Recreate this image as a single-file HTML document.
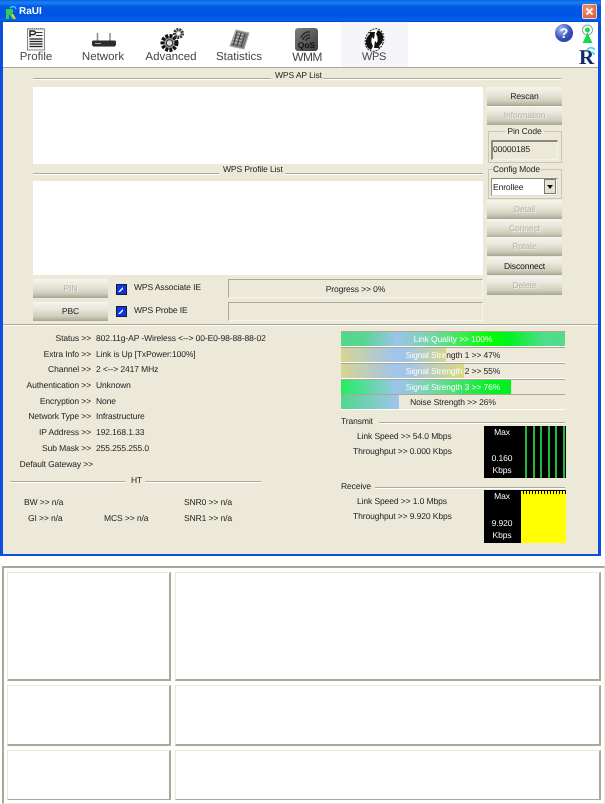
<!DOCTYPE html>
<html><head><meta charset="utf-8">
<style>
html,body{margin:0;padding:0;background:#fff;}
body{width:605px;height:804px;position:relative;overflow:hidden;font-family:"Liberation Sans",sans-serif;font-size:8.5px;color:#222;text-rendering:geometricPrecision;}
div,span,svg{position:absolute;}
.t{white-space:nowrap;line-height:12px;height:12px;letter-spacing:-.1px;}
.r{text-align:right;}
.c{text-align:center;}
.btn{left:487px;width:75px;height:19px;background:linear-gradient(#f5f4ee 0%,#e9e8dc 35%,#cfcebd 75%,#a8a693 100%);text-align:center;line-height:19px;letter-spacing:-.1px;color:#222;}
.dis{color:#b5b4a6;text-shadow:1px 1px 0 #f2f1e8;}
.ln{height:1px;background:#aca899;box-shadow:0 1px 0 #fff;}
.tab{font-size:11.5px;letter-spacing:0;color:#444;text-align:center;width:70px;top:50px;line-height:14px;white-space:nowrap;}
.bar{left:341px;width:224px;height:14px;background:#ece9d8;box-shadow:0 -1px 0 #aca899,0 1px 0 #fff;}
.bar .f{left:0;top:0;height:14px;overflow:hidden;}
.bar .l{left:0;width:224px;top:1px;text-align:center;line-height:12px;letter-spacing:-.1px;white-space:nowrap;}
.cell{box-sizing:border-box;background:#fff;border-top:1px solid #ece9d8;border-left:1px solid #ece9d8;border-right:2px solid #aca899;border-bottom:2px solid #aca899;}
.sunk{box-sizing:border-box;border-top:1px solid #aca899;border-left:1px solid #aca899;border-right:1px solid #f6f5ee;border-bottom:1px solid #f6f5ee;}
.wt{color:#fff;}
.cb{left:116px;width:11px;height:11px;background:#0c34e8;border:1px solid #1a1a2a;box-sizing:border-box;}
</style></head>
<body>
<!-- window -->
<div style="left:0;top:0;width:601px;height:556px;background:#0a50dc;"></div>
<div style="left:0;top:0;width:601px;height:22px;background:linear-gradient(#0a60e8 0%,#1a82f4 12%,#0458e4 30%,#0054e3 70%,#0460ee 90%,#0048c8 100%);"></div>
<svg style="left:4px;top:5px" width="14" height="15" viewBox="0 0 14 15"><path d="M2 4h5c3 0 3 4 0 5l3 5H8L5 9v5H2z" fill="#2fd14a"/><path d="M6 3c2-2 5-2 6 1" stroke="#3ac8ff" stroke-width="1.500" fill="none"/><path d="M8 9l3 5" stroke="#f0d020" stroke-width="2"/></svg>
<div class="t" style="left:19px;top:6px;font-size:10px;font-weight:bold;color:#fff;letter-spacing:0;">RaUI</div>
<div style="left:582px;top:4px;width:15px;height:15px;border-radius:2px;border:1px solid #e8d8d0;box-sizing:border-box;background:radial-gradient(circle at 35% 30%,#f09a78,#dc5030);"></div>
<svg style="left:582px;top:4px" width="15" height="15"><path d="M4.500 4.500l6 6M10.500 4.500l-6 6" stroke="#fff" stroke-width="1.800"/></svg>

<div style="left:3px;top:22px;width:595px;height:45px;background:#fff;"></div>
<div style="left:341px;top:22px;width:67px;height:45px;background:#f4f4f9;"></div>
<div style="left:3px;top:67px;width:595px;height:1px;background:#a8a698;"></div>
<div style="left:3px;top:68px;width:595px;height:486px;background:#ece9d8;"></div>

<!-- toolbar icons -->
<svg style="left:26px;top:27px" width="20" height="24" viewBox="0 0 20 24"><rect x="1.500" y="2" width="17" height="21" fill="#f4f4f4" stroke="#888"/><path d="M2 1.500h16" stroke="#777" stroke-dasharray="1 1"/><path d="M4 10V4h3.500a1.700 1.700 0 0 1 0 3.600H4" fill="none" stroke="#222" stroke-width="1.400"/><path d="M10 5.500h6.500M10 8.500h6.500" stroke="#333"/><path d="M3.500 12h13M3.500 14.500h13M3.500 17h13M3.500 19.500h13" stroke="#222" stroke-width="1.300"/></svg>
<div class="tab" style="left:1px;">Profile</div>

<svg style="left:91px;top:32px" width="26" height="16" viewBox="0 0 26 16"><path d="M6.500 1v8M19 1v8" stroke="#888" stroke-width="1.500"/><rect x="1" y="8.500" width="24" height="5.500" rx="1.500" fill="#2c2c2c"/><path d="M4 11.500h6" stroke="#aaa"/><path d="M2 14.500h22" stroke="#888"/></svg>
<div class="tab" style="left:68px;">Network</div>

<svg style="left:159px;top:27px" width="26" height="26" viewBox="0 0 26 26"><circle cx="10.500" cy="16" r="7" fill="#999" stroke="#111" stroke-width="4" stroke-dasharray="2.800 1.300"/><circle cx="10.500" cy="16" r="3.200" fill="#ddd" stroke="#333"/><circle cx="19.500" cy="6.500" r="4" fill="#bbb" stroke="#333" stroke-width="3" stroke-dasharray="1.800 1"/><circle cx="19.500" cy="6.500" r="1.500" fill="#fff"/></svg>
<div class="tab" style="left:136px;">Advanced</div>

<svg style="left:228px;top:28px" width="23" height="23" viewBox="0 0 23 23"><path d="M8 2l13 3-5 16-14-3z" fill="#7a7a7a" stroke="#aaa"/><path d="M7 5l10 2M6 8l10 2M5 11l10 2M4 14l10 2" stroke="#d4d4d4" stroke-dasharray="2 1"/><path d="M9 4l-4 13M13 5l-4 13M17 6l-4 13" stroke="#3c3c3c"/></svg>
<div class="tab" style="left:204px;">Statistics</div>

<div style="left:295px;top:28px;width:23px;height:23px;background:linear-gradient(135deg,#808080,#3c3c3c);border-radius:3px;"></div>
<svg style="left:295px;top:28px" width="23" height="23" viewBox="0 0 23 23"><path d="M6 10a8 8 0 0 1 9-6M8 12a6 6 0 0 1 7-5M11 13a3 3 0 0 1 4-3" stroke="#222" stroke-width="1.300" fill="none"/></svg>
<div class="t" style="left:295px;top:40px;width:23px;text-align:center;font-size:8.5px;font-weight:bold;color:#111;letter-spacing:0;height:10px;line-height:10px;">QoS</div>
<div class="tab" style="left:272px;font-size:12px;letter-spacing:-.6px;">WMM</div>

<svg style="left:363px;top:28px" width="23" height="24" viewBox="0 0 23 24"><ellipse cx="11.500" cy="12" rx="9" ry="11.500" transform="rotate(20 11.500 12)" fill="#fff" stroke="#222" stroke-dasharray="2 1"/><path d="M5 20C1 15 3 9 7 6L6 4h6l-1 7-2-2c-1 3-1 6 1 9l-2 4z" fill="#111"/><path d="M18 4c4 5 2 11-2 14l1 2h-6l1-7 2 2c1-3 1-6-1-9l2-4z" fill="#111"/></svg>
<div class="tab" style="left:339px;letter-spacing:-.3px;font-size:11px;">WPS</div>

<!-- top right icons -->
<div style="left:555px;top:24px;width:18px;height:18px;border-radius:50%;background:radial-gradient(circle at 35% 30%,#a8c0f0,#3a54c0 50%,#1c2c8c);"></div>
<div class="t c" style="left:555px;top:26px;width:18px;height:14px;line-height:14px;font-size:14px;font-weight:bold;color:#fff;letter-spacing:0;">?</div>
<svg style="left:580px;top:24px" width="14" height="20" viewBox="0 0 14 20"><circle cx="7.500" cy="6" r="5" fill="#fff" stroke="#88a898"/><circle cx="7.500" cy="6" r="2.500" fill="#1ed64a"/><path d="M7.500 8l-1.500 4-3.500 7h10l-3.500-7z" fill="#12dc46"/></svg>
<div class="t" style="left:579px;top:50px;font-family:'Liberation Serif',serif;font-size:21px;font-weight:bold;color:#10286c;line-height:15px;height:15px;letter-spacing:0;">R</div>
<svg style="left:585px;top:46px" width="12" height="11"><path d="M2 4c2-3 6-3 8 0M6 7c1-1 3-1 3 2" stroke="#30d8e8" stroke-width="1.500" fill="none"/></svg>

<!-- WPS AP list -->
<div class="ln" style="left:33px;top:78px;width:238px;"></div>
<div class="t" style="left:275px;top:69px;">WPS AP List</div>
<div class="ln" style="left:323px;top:78px;width:238px;"></div>
<div style="left:33px;top:87px;width:450px;height:77px;background:#fff;"></div>
<div class="ln" style="left:33px;top:173px;width:186px;"></div>
<div class="t" style="left:223px;top:163px;">WPS Profile List</div>
<div class="ln" style="left:285px;top:173px;width:198px;"></div>
<div style="left:33px;top:181px;width:450px;height:94px;background:#fff;"></div>

<!-- right col -->
<div class="btn" style="top:87px;">Rescan</div>
<div class="btn dis" style="top:106px;">Information</div>
<div class="sunk" style="left:488px;top:131px;width:74px;height:32px;border-color:#c8c6b6;"></div>
<div class="t c" style="left:505px;top:125px;width:39px;background:#ece9d8;">Pin Code</div>
<div class="sunk" style="left:491px;top:140px;width:67px;height:20px;border-top:2px solid #8c8a7c;border-left:2px solid #8c8a7c;border-right:1px solid #f4f3ea;border-bottom:1px solid #f4f3ea;"></div>
<div class="t" style="left:493px;top:143px;">00000185</div>
<div class="sunk" style="left:488px;top:169px;width:74px;height:30px;border-color:#c8c6b6;"></div>
<div class="t c" style="left:492px;top:163px;width:49px;background:#ece9d8;">Config Mode</div>
<div style="left:491px;top:178px;width:67px;height:18px;background:#fff;box-sizing:border-box;border:1px solid #8c8a7c;border-right-color:#ddd;border-bottom-color:#ddd;"></div>
<div class="t" style="left:493px;top:181px;">Enrollee</div>
<div style="left:544px;top:179px;width:12px;height:15px;background:#e4e2d2;border:1px solid #777;box-sizing:border-box;"></div>
<div style="left:547px;top:185px;width:0;height:0;border-left:3px solid transparent;border-right:3px solid transparent;border-top:4px solid #111;"></div>
<div class="btn dis" style="top:200px;">Detail</div>
<div class="btn dis" style="top:219px;">Connect</div>
<div class="btn dis" style="top:237px;">Rotate</div>
<div class="btn" style="top:257px;height:18px;line-height:18px;color:#111;">Disconnect</div>
<div class="btn dis" style="top:276px;">Delete</div>

<!-- PIN/PBC row -->
<div class="btn dis" style="left:33px;top:279px;">PIN</div>
<div class="btn" style="left:33px;top:302px;">PBC</div>
<div class="cb" style="top:284px;"></div>
<div class="cb" style="top:306px;"></div>
<svg style="left:117px;top:285px" width="9" height="9"><path d="M1 7l5-5v2L3 7z" fill="#fff"/></svg>
<svg style="left:117px;top:307px" width="9" height="9"><path d="M1 7l5-5v2L3 7z" fill="#fff"/></svg>
<div class="t" style="left:134px;top:281px;">WPS Associate IE</div>
<div class="t" style="left:134px;top:304px;">WPS Probe IE</div>
<div class="sunk" style="left:228px;top:279px;width:255px;height:19px;"></div>
<div class="t c" style="left:228px;top:283px;width:255px;">Progress &gt;&gt; 0%</div>
<div class="sunk" style="left:228px;top:302px;width:255px;height:19px;"></div>
<div style="left:3px;top:324px;width:595px;height:1px;background:#aca899;box-shadow:0 1px 0 #fbfaf4;"></div>

<!-- status left -->
<div class="t r" style="left:0;top:332px;width:91px;">Status &gt;&gt;</div><div class="t" style="left:96px;top:332px;">802.11g-AP -Wireless &lt;--&gt; 00-E0-98-88-88-02</div>
<div class="t r" style="left:0;top:348px;width:91px;">Extra Info &gt;&gt;</div><div class="t" style="left:96px;top:348px;">Link is Up [TxPower:100%]</div>
<div class="t r" style="left:0;top:363px;width:91px;">Channel &gt;&gt;</div><div class="t" style="left:96px;top:363px;">2 &lt;--&gt; 2417 MHz</div>
<div class="t r" style="left:0;top:379px;width:91px;">Authentication &gt;&gt;</div><div class="t" style="left:96px;top:379px;">Unknown</div>
<div class="t r" style="left:0;top:395px;width:91px;">Encryption &gt;&gt;</div><div class="t" style="left:96px;top:395px;">None</div>
<div class="t r" style="left:0;top:410px;width:91px;">Network Type &gt;&gt;</div><div class="t" style="left:96px;top:410px;">Infrastructure</div>
<div class="t r" style="left:0;top:426px;width:91px;">IP Address &gt;&gt;</div><div class="t" style="left:96px;top:426px;">192.168.1.33</div>
<div class="t r" style="left:0;top:442px;width:91px;">Sub Mask &gt;&gt;</div><div class="t" style="left:96px;top:442px;">255.255.255.0</div>
<div class="t r" style="left:0;top:458px;width:93px;">Default Gateway &gt;&gt;</div>
<div class="ln" style="left:10px;top:481px;width:115px;"></div>
<div class="t" style="left:131px;top:474px;">HT</div>
<div class="ln" style="left:145px;top:481px;width:116px;"></div>
<div class="t" style="left:24px;top:496px;">BW &gt;&gt; n/a</div>
<div class="t" style="left:28px;top:512px;">GI &gt;&gt; n/a</div>
<div class="t" style="left:104px;top:512px;">MCS &gt;&gt; n/a</div>
<div class="t" style="left:184px;top:496px;">SNR0 &gt;&gt; n/a</div>
<div class="t" style="left:184px;top:512px;">SNR1 &gt;&gt; n/a</div>

<!-- bars -->
<div class="bar" style="top:332px;"><div class="l">Link Quality &gt;&gt; 100%</div><div class="f" style="width:224px;background:linear-gradient(90deg,#4fd98a 0%,#58d690 10%,#9cc4ea 25%,#70d8a0 42%,#00ff00 66%,#00f420 75%,#4ede88 90%,#52dc8c 100%);"><div class="l wt">Link Quality &gt;&gt; 100%</div></div></div>
<div class="bar" style="top:348px;"><div class="l">Signal Strength 1 &gt;&gt; 47%</div><div class="f" style="width:105px;background:linear-gradient(90deg,#d6d690 0%,#a0c4ec 52%,#9fc4e8 62%,#d6d68e 100%);"><div class="l wt">Signal Strength 1 &gt;&gt; 47%</div></div></div>
<div class="bar" style="top:364px;"><div class="l">Signal Strength 2 &gt;&gt; 55%</div><div class="f" style="width:123px;background:linear-gradient(90deg,#d6d690 0%,#a0c4ec 45%,#a4c6e4 55%,#dcd880 100%);"><div class="l wt">Signal Strength 2 &gt;&gt; 55%</div></div></div>
<div class="bar" style="top:380px;"><div class="l">Signal Strength 3 &gt;&gt; 76%</div><div class="f" style="width:170px;background:linear-gradient(90deg,#22ee60 0%,#9cc4ea 33%,#70d8a0 55%,#00f020 90%,#00f020 100%);"><div class="l wt">Signal Strength 3 &gt;&gt; 76%</div></div></div>
<div class="bar" style="top:395px;"><div class="f" style="width:58px;background:linear-gradient(90deg,#4fd88c,#a0c4ee);"></div><div class="l">Noise Strength &gt;&gt; 26%</div></div>

<!-- transmit -->
<div class="t" style="left:341px;top:415px;">Transmit</div>
<div class="ln" style="left:379px;top:422px;width:186px;"></div>
<div class="t" style="left:357px;top:430px;">Link Speed &gt;&gt; 54.0 Mbps</div>
<div class="t" style="left:353px;top:445px;">Throughput &gt;&gt; 0.000 Kbps</div>
<div style="left:484px;top:426px;width:82px;height:52px;background:#000;"></div>
<div style="left:525px;top:426px;width:2px;height:52px;background:#22b83a;"></div>
<div style="left:533px;top:426px;width:2px;height:52px;background:#22b83a;"></div>
<div style="left:540px;top:426px;width:2px;height:52px;background:#22b83a;"></div>
<div style="left:548px;top:426px;width:2px;height:52px;background:#22b83a;"></div>
<div style="left:555px;top:426px;width:2px;height:52px;background:#22b83a;"></div>
<div style="left:563px;top:426px;width:2px;height:52px;background:#22b83a;"></div>
<div class="t c wt" style="left:484px;top:426px;width:36px;">Max</div>
<div class="t c wt" style="left:484px;top:452px;width:36px;">0.160</div>
<div class="t c wt" style="left:484px;top:464px;width:36px;">Kbps</div>

<!-- receive -->
<div class="t" style="left:341px;top:480px;">Receive</div>
<div class="ln" style="left:375px;top:487px;width:190px;"></div>
<div class="t" style="left:357px;top:495px;">Link Speed &gt;&gt; 1.0 Mbps</div>
<div class="t" style="left:353px;top:510px;">Throughput &gt;&gt; 9.920 Kbps</div>
<div style="left:484px;top:490px;width:82px;height:53px;background:#000;"></div>
<div style="left:521px;top:494px;width:45px;height:49px;background:#ffff00;"></div>
<div style="left:521px;top:491px;width:45px;height:3px;background:repeating-linear-gradient(90deg,#ffff00 0 2px,#000 2px 3px);"></div>
<div class="t c wt" style="left:484px;top:490px;width:36px;">Max</div>
<div class="t c wt" style="left:484px;top:517px;width:36px;">9.920</div>
<div class="t c wt" style="left:484px;top:529px;width:36px;">Kbps</div>

<!-- table below -->
<div style="left:2px;top:566px;width:603px;height:238px;box-sizing:border-box;border-top:2px solid #aca899;border-left:2px solid #aca899;border-right:1px solid #ece9d8;border-bottom:1px solid #ece9d8;"></div>
<div class="cell" style="left:7px;top:572px;width:164px;height:109px;"></div>
<div class="cell" style="left:175px;top:572px;width:426px;height:109px;"></div>
<div class="cell" style="left:7px;top:685px;width:164px;height:61px;"></div>
<div class="cell" style="left:175px;top:685px;width:426px;height:61px;"></div>
<div class="cell" style="left:7px;top:750px;width:164px;height:50px;border-bottom-width:1px;"></div>
<div class="cell" style="left:175px;top:750px;width:426px;height:50px;border-bottom-width:1px;"></div>
</body></html>
